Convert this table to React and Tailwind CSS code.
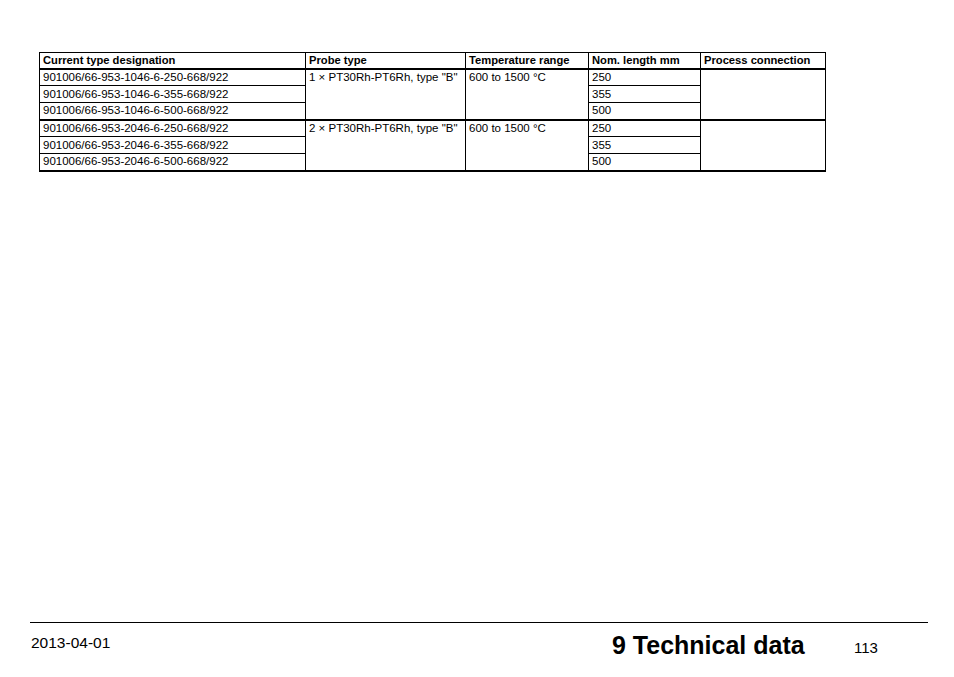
import React from "react";

const groups = [
  {
    probe: '1 × PT30Rh-PT6Rh, type "B"',
    rows: [
      ["901006/66-953-1046-6-250-668/922", "250"],
      ["901006/66-953-1046-6-355-668/922", "355"],
      ["901006/66-953-1046-6-500-668/922", "500"],
    ],
  },
  {
    probe: '2 × PT30Rh-PT6Rh, type "B"',
    rows: [
      ["901006/66-953-2046-6-250-668/922", "250"],
      ["901006/66-953-2046-6-355-668/922", "355"],
      ["901006/66-953-2046-6-500-668/922", "500"],
    ],
  },
];

export default function App() {
  return (
    <div
      className="relative w-[954px] h-[677px] bg-white text-black overflow-hidden"
      style={{ fontFamily: '"Liberation Sans", Arial, sans-serif' }}
    >
      <div className="pt-[52px] pl-[39px]">
        <table className="border-collapse table-fixed text-[11.5px] leading-[13px] border-b-2 border-black">
          <colgroup>
            <col className="w-[266px]" />
            <col className="w-[160px]" />
            <col className="w-[123px]" />
            <col className="w-[112px]" />
            <col className="w-[125px]" />
          </colgroup>
          <thead>
            <tr className="h-[16px] border-b-2 border-black">
              {["Current type designation", "Probe type", "Temperature range", "Nom. length mm", "Process connection"].map((h) => (
                <th key={h} className="border border-black text-left font-bold text-[11.2px] px-[3px] py-0 align-middle">
                  {h}
                </th>
              ))}
            </tr>
          </thead>
          <tbody>
            {groups.map((g, gi) =>
              g.rows.map((r, ri) => (
                <tr
                  key={gi + "-" + ri}
                  className={"h-[17px] " + (ri === 2 && gi === 0 ? "border-b-2 border-black" : "")}
                >
                  <td className="border border-black px-[3px] py-0 align-middle">{r[0]}</td>
                  {ri === 0 && (
                    <>
                      <td rowSpan={3} className="border border-black px-[3px] pt-[1px] align-top">{g.probe}</td>
                      <td rowSpan={3} className="border border-black px-[3px] pt-[1px] align-top">600 to 1500 °C</td>
                    </>
                  )}
                  <td className="border border-black px-[3px] py-0 align-middle">{r[1]}</td>
                  {ri === 0 && <td rowSpan={3} className="border border-black"></td>}
                </tr>
              ))
            )}
          </tbody>
        </table>
      </div>

      <div className="absolute left-[30px] top-[622px] w-[898px] border-t border-black"></div>
      <div className="absolute left-0 top-[622px] w-full">
        <div className="relative h-[55px]">
          <span className="absolute left-[31px] top-[9px] text-[15.5px]">2013-04-01</span>
          <span className="absolute left-[612px] top-[5px] text-[25px] font-bold">9 Technical data</span>
          <span className="absolute left-[854px] top-[15px] text-[15px]">113</span>
        </div>
      </div>
    </div>
  );
}
